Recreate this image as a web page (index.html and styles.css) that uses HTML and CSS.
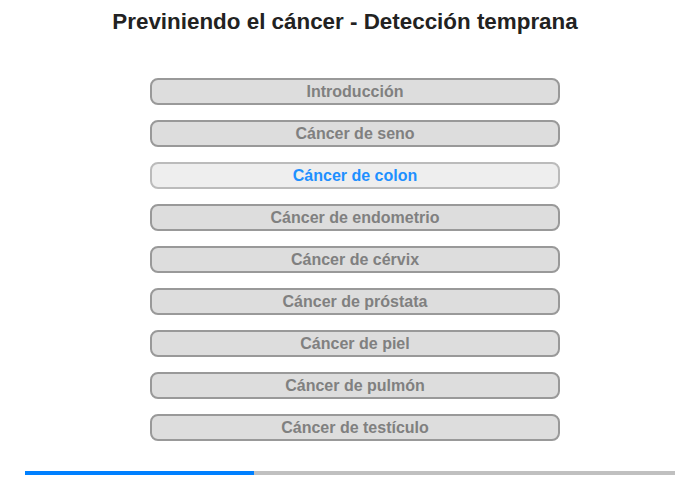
FILE: index.html
```html
<!DOCTYPE html>
<html>
<head>
<meta charset="utf-8">
<link rel="stylesheet" href="styles.css">
</head>
<body>
<div class="page">
  <h1 class="title">Previniendo el cáncer - Detección temprana</h1>
  <nav class="menu">
    <div class="item">Introducción</div>
    <div class="item">Cáncer de seno</div>
    <div class="item active">Cáncer de colon</div>
    <div class="item">Cáncer de endometrio</div>
    <div class="item">Cáncer de cérvix</div>
    <div class="item">Cáncer de próstata</div>
    <div class="item">Cáncer de piel</div>
    <div class="item">Cáncer de pulmón</div>
    <div class="item">Cáncer de testículo</div>
  </nav>
  <div class="progress"><div class="fill" style="width:229px"></div></div>
</div>
</body>
</html>
```
FILE: styles.css
```css
html, body { margin: 0; padding: 0; background: #fff; }
.page {
  width: 700px;
  height: 480px;
  font-family: "Liberation Sans", Arial, sans-serif;
  display: flex;
  flex-direction: column;
}
.title {
  margin: 10px 0 0 0;
  padding-right: 10px;
  font-size: 22.4px;
  font-weight: bold;
  line-height: 24px;
  color: #222;
  text-align: center;
}
.menu {
  margin: 44px 0 0 150px;
  display: flex;
  flex-direction: column;
  gap: 15px;
  width: 410px;
}
.item {
  box-sizing: border-box;
  height: 27px;
  border: 2px solid #999;
  border-radius: 8px;
  background: #ddd;
  color: #808080;
  font-size: 16px;
  font-weight: bold;
  line-height: 23px;
  text-align: center;
}
.item.active {
  border-color: #bbb;
  background: #eee;
  color: #1e90ff;
}
.progress {
  margin: 30px 0 0 25px;
  width: 650px;
  height: 4px;
  background: #c0c0c0;
}
.fill {
  height: 100%;
  background: #0080ff;
}
```
